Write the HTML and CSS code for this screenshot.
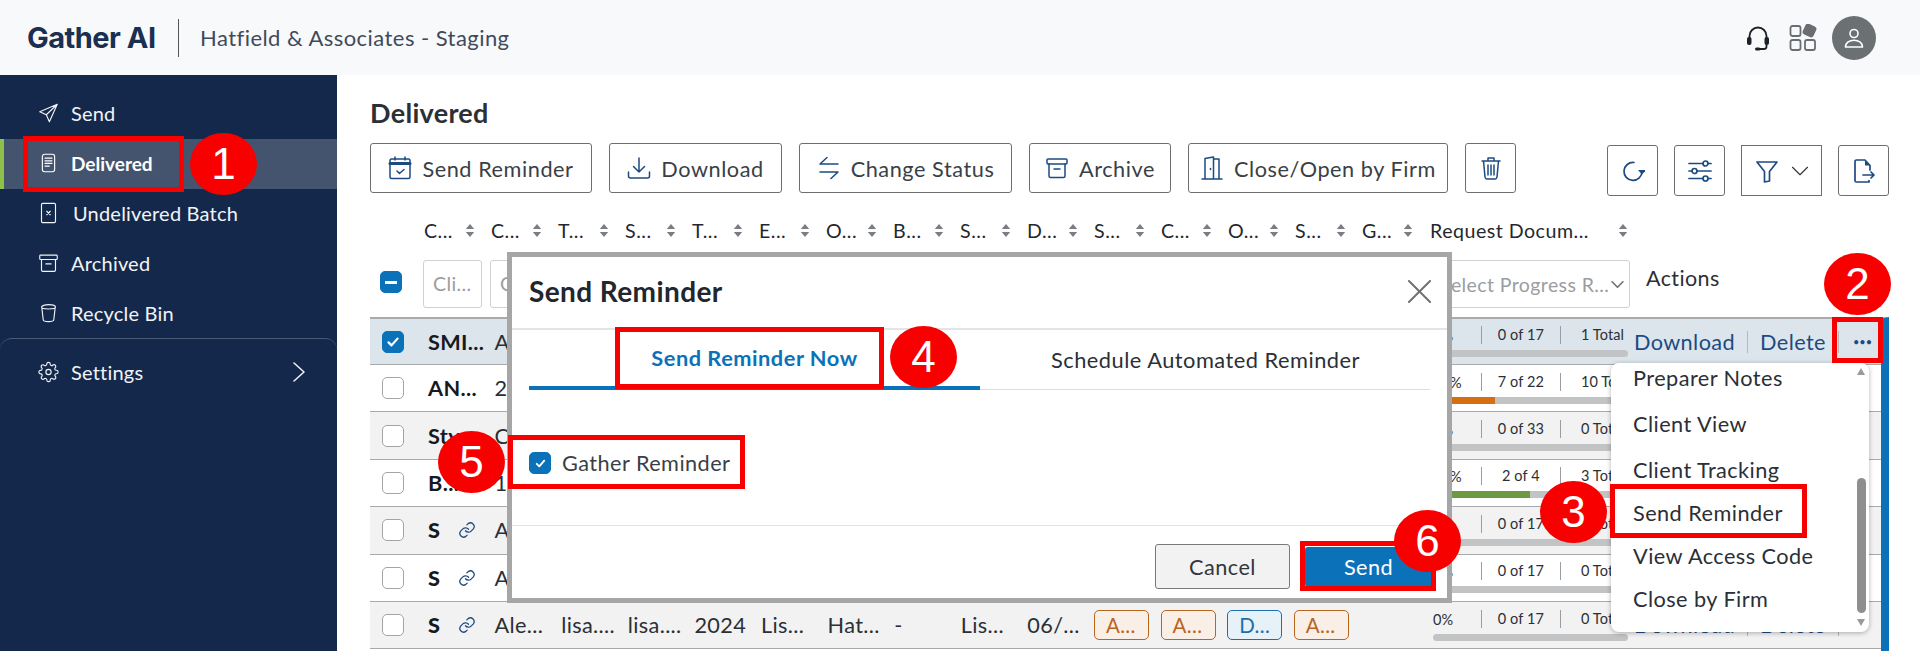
FILE: index.html
```
<!DOCTYPE html>
<html lang="en">
<head>
<meta charset="utf-8">
<title>Gather AI - Delivered</title>
<link rel="stylesheet" href="styles.css">
</head>
<body>
<svg class="sprite" width="0" height="0" aria-hidden="true">
  <symbol id="i-send" viewBox="0 0 24 24"><path d="M22 2 2 10.500l7.500 3.500L13 22zM22 2 9.500 14"/></symbol>
  <symbol id="i-doc" viewBox="0 0 24 24"><rect x="5" y="2" width="14" height="20" rx="2.500"/><path d="M8 6.500h8M8 9.500h8M8 12.500h8M8 15.500h5"/></symbol>
  <symbol id="i-undel" viewBox="0 0 24 24"><rect x="4" y="1" width="16" height="22" rx="1.500"/><path d="m10 10 4 4M14 10l-4 4"/></symbol>
  <symbol id="i-archive" viewBox="0 0 24 24"><rect x="2" y="3" width="20" height="5" rx="1"/><path d="M4 8v12a1.500 1.500 0 0 0 1.500 1.500h13A1.500 1.500 0 0 0 20 20V8M9 13h6"/></symbol>
  <symbol id="i-bin" viewBox="0 0 24 24"><path d="M4 5.500c0-4 16-4 16 0 0 2.500-16 2.500-16 0zM4.500 7l1.500 13c.3 2.500 11.700 2.500 12 0L19.500 7"/></symbol>
  <symbol id="i-gear" viewBox="0 0 24 24"><circle cx="12" cy="12" r="3"/><path d="M19.400 15a1.650 1.650 0 0 0 .33 1.820l.06.06a2 2 0 0 1 0 2.830 2 2 0 0 1-2.830 0l-.06-.06a1.650 1.650 0 0 0-1.820-.33 1.650 1.650 0 0 0-1 1.510V21a2 2 0 0 1-2 2 2 2 0 0 1-2-2v-.09A1.650 1.650 0 0 0 9 19.400a1.650 1.650 0 0 0-1.820.33l-.06.06a2 2 0 0 1-2.830 0 2 2 0 0 1 0-2.830l.06-.06a1.650 1.650 0 0 0 .33-1.820 1.650 1.650 0 0 0-1.510-1H3a2 2 0 0 1-2-2 2 2 0 0 1 2-2h.09A1.650 1.650 0 0 0 4.600 9a1.650 1.650 0 0 0-.33-1.820l-.06-.06a2 2 0 0 1 0-2.830 2 2 0 0 1 2.830 0l.06.06a1.650 1.650 0 0 0 1.820.33H9a1.650 1.650 0 0 0 1-1.510V3a2 2 0 0 1 2-2 2 2 0 0 1 2 2v.09a1.650 1.650 0 0 0 1 1.510 1.650 1.650 0 0 0 1.820-.33l.06-.06a2 2 0 0 1 2.830 0 2 2 0 0 1 0 2.830l-.06.06a1.650 1.650 0 0 0-.33 1.820V9a1.650 1.650 0 0 0 1.510 1H21a2 2 0 0 1 2 2 2 2 0 0 1-2 2h-.09a1.650 1.650 0 0 0-1.510 1z"/></symbol>
  <symbol id="i-cal" viewBox="0 0 24 24"><rect x="2" y="3" width="20" height="19.500" rx="1.500"/><path d="M7 1v3M17 1v3M9 15l2.500 2.500L16 13.500"/><path class="thick" d="M2 7.500h20"/></symbol>
  <symbol id="i-down" viewBox="0 0 24 24"><path d="M12 2v14M6.500 10.500 12 16l5.500-5.500M1.500 16v4A2 2 0 0 0 3.500 22h17a2 2 0 0 0 2-2v-4"/></symbol>
  <symbol id="i-swap" viewBox="0 0 24 24"><path d="M10 1.500 3 8h18M3 16h18l-7 6.500"/></symbol>
  <symbol id="i-door" viewBox="0 0 24 24"><path d="M2 23h20M5 23V2.500L13.500 1v22M13.500 3H19v20M10.500 12.500v1"/></symbol>
  <symbol id="i-trash" viewBox="0 0 24 24"><path d="M3 5h18M9 5V2h6v3M4.500 5l1.500 16c.2 1.500 1 2 2 2h8c1 0 1.800-.5 2-2l1.500-16M9 9v10M12 9v10M15 9v10"/></symbol>
  <symbol id="i-refresh" viewBox="0 0 24 24"><path d="M13 3.500A9 9 0 1 0 21 12.500"/><path class="solid" d="m17 11 8 0-4 4.500z"/></symbol>
  <symbol id="i-sliders" viewBox="0 0 24 24"><path d="M1 4.500h14M20 4.500h3M1 12h3M9 12h14M1 19.500h14M20 19.500h3"/><circle cx="17.500" cy="4.500" r="2.500"/><circle cx="6.500" cy="12" r="2.500"/><circle cx="17.500" cy="19.500" r="2.500"/></symbol>
  <symbol id="i-filter" viewBox="0 0 24 24"><path d="M2 3h20l-7.500 9.500V22L9.500 23V12.500z"/></symbol>
  <symbol id="i-chev" viewBox="0 0 24 24"><path d="m2 7 10 10L22 7"/></symbol>
  <symbol id="i-chev-r" viewBox="0 0 12 20"><path d="m1 1 10 9-10 9"/></symbol>
  <symbol id="i-export" viewBox="0 0 24 24"><path d="M17 21.500V23H4.500A1.500 1.500 0 0 1 3 21.500v-19A1.500 1.500 0 0 1 4.500 1H13l5 5.500V11M11 16h11M19 13l3 3-3 3"/><path class="solid" d="M13 1l5 5.500h-5z"/></symbol>
  <symbol id="i-link" viewBox="0 0 24 24"><path d="M10 13a5 5 0 0 0 7.500.5l3-3a5 5 0 0 0-7-7l-1.700 1.700"/><path d="M14 11a5 5 0 0 0-7.500-.5l-3 3a5 5 0 0 0 7 7l1.700-1.700"/></symbol>
  <symbol id="i-sort" viewBox="0 0 10 14"><path class="solid" d="M5 0 9.500 5.500H.5zM5 14 .5 8.500h9z"/></symbol>
  <symbol id="i-check" viewBox="0 0 24 24"><path d="m6 12.500 4 4 8-9"/></symbol>
  <symbol id="i-x" viewBox="0 0 24 24"><path d="m1 1 22 22M23 1 1 23"/></symbol>
</svg>

<div class="app">
  <header class="topbar">
    <span class="logo">Gather AI</span>
    <span class="firm">Hatfield &amp; Associates - Staging</span>
    <div class="top-icons">
      <svg class="top-headset" viewBox="0 0 24 26"><path class="hs-line" d="M3.500 14V11a8.500 8.500 0 0 1 17 0v3M20.500 20v1.500a2.500 2.500 0 0 1-2.500 2.500h-4"/><rect class="hs-fill" x="1" y="12" width="4.500" height="8" rx="2"/><rect class="hs-fill" x="18.500" y="12" width="4.500" height="8" rx="2"/><rect class="hs-fill" x="9" y="22.500" width="5.500" height="3" rx="1.500"/></svg>
      <svg class="top-grid" viewBox="0 0 28 28"><rect x="1.500" y="2" width="10" height="10" rx="2"/><rect x="1.500" y="16" width="10" height="10" rx="2"/><rect x="16" y="16" width="10" height="10" rx="2"/><rect class="grid-solid" x="15.500" y="1.500" width="10" height="10" rx="2" transform="rotate(25 20.500 6.500)"/></svg>
      <span class="avatar"><svg viewBox="0 0 24 24"><circle cx="12" cy="7.500" r="4"/><path d="M3.500 21c0-9 17-9 17 0z"/></svg></span>
    </div>
  </header>

  <div class="layout">
    <aside class="sidebar">
      <nav class="nav">
        <a class="nav-item"><svg class="nav-icon"><use href="#i-send"/></svg>Send</a>
        <a class="nav-item is-active"><svg class="nav-icon"><use href="#i-doc"/></svg>Delivered</a>
        <a class="nav-item nav-item-wide"><svg class="nav-icon"><use href="#i-undel"/></svg>Undelivered Batch</a>
        <a class="nav-item"><svg class="nav-icon"><use href="#i-archive"/></svg>Archived</a>
        <a class="nav-item"><svg class="nav-icon"><use href="#i-bin"/></svg>Recycle Bin</a>
      </nav>
      <a class="nav-settings"><svg class="nav-icon"><use href="#i-gear"/></svg>Settings<svg class="nav-chev"><use href="#i-chev-r"/></svg></a>
    </aside>

    <main class="main">
      <h1 class="page-title">Delivered</h1>
      <div class="toolbar">
        <button class="btn w-remind"><svg class="btn-icon"><use href="#i-cal"/></svg>Send Reminder</button>
        <button class="btn w-down"><svg class="btn-icon"><use href="#i-down"/></svg>Download</button>
        <button class="btn w-status"><svg class="btn-icon"><use href="#i-swap"/></svg>Change Status</button>
        <button class="btn w-arch"><svg class="btn-icon"><use href="#i-archive"/></svg>Archive</button>
        <button class="btn w-close"><svg class="btn-icon"><use href="#i-door"/></svg>Close/Open by Firm</button>
        <button class="btn w-trash"><svg class="btn-icon"><use href="#i-trash"/></svg></button>
        <div class="tools">
          <button class="tool"><svg class="tool-icon"><use href="#i-refresh"/></svg></button>
          <button class="tool"><svg class="tool-icon"><use href="#i-sliders"/></svg></button>
          <button class="tool tool-wide"><svg class="tool-icon"><use href="#i-filter"/></svg><svg class="tool-chev"><use href="#i-chev"/></svg></button>
          <button class="tool"><svg class="tool-icon"><use href="#i-export"/></svg></button>
        </div>
      </div>

      <div class="grid-row head">
        <span></span>
        <span class="th">C...<svg class="sort"><use href="#i-sort"/></svg></span>
        <span class="th">C...<svg class="sort"><use href="#i-sort"/></svg></span>
        <span class="th">T...<svg class="sort"><use href="#i-sort"/></svg></span>
        <span class="th">S...<svg class="sort"><use href="#i-sort"/></svg></span>
        <span class="th">T...<svg class="sort"><use href="#i-sort"/></svg></span>
        <span class="th">E...<svg class="sort"><use href="#i-sort"/></svg></span>
        <span class="th">O...<svg class="sort"><use href="#i-sort"/></svg></span>
        <span class="th">B...<svg class="sort"><use href="#i-sort"/></svg></span>
        <span class="th">S...<svg class="sort"><use href="#i-sort"/></svg></span>
        <span class="th">D...<svg class="sort"><use href="#i-sort"/></svg></span>
        <span class="th">S...<svg class="sort"><use href="#i-sort"/></svg></span>
        <span class="th">C...<svg class="sort"><use href="#i-sort"/></svg></span>
        <span class="th">O...<svg class="sort"><use href="#i-sort"/></svg></span>
        <span class="th">S...<svg class="sort"><use href="#i-sort"/></svg></span>
        <span class="th">G...<svg class="sort"><use href="#i-sort"/></svg></span>
        <span class="th th-wide">Request Docum...<svg class="sort"><use href="#i-sort"/></svg></span>
      </div>

      <div class="grid-row filters">
        <span class="cb cb-mixed"></span>
        <span class="input">Cli...</span>
        <span class="input">C...</span>
        <span class="select">Select Progress R...<svg class="select-chev"><use href="#i-chev"/></svg></span>
        <span class="actions-head">Actions</span>
      </div>

      <div class="rows">
        <div class="row is-selected">
          <span class="cb cb-on"><svg><use href="#i-check"/></svg></span>
          <span class="td td-name">SMI...</span><span class="td">A...</span>
          <div class="prog"><div class="prog-text"><span>0%</span><span class="prog-mid">0 of 17</span><span class="prog-end">1 Total</span></div><div class="bar"></div></div>
          <div class="acts"><a class="act">Download</a><a class="act act-sep">Delete</a><span class="act-more">•••</span></div>
        </div>
        <div class="row">
          <span class="cb"></span>
          <span class="td td-name">AN...</span><span class="td">2...</span>
          <div class="prog"><div class="prog-text"><span>32%</span><span class="prog-mid">7 of 22</span><span class="prog-end">10 Total</span></div><div class="bar"><i class="fill fill-orange"></i></div></div>
        </div>
        <div class="row is-alt">
          <span class="cb"></span>
          <span class="td td-name">Sty...</span><span class="td">C...</span>
          <div class="prog"><div class="prog-text"><span>0%</span><span class="prog-mid">0 of 33</span><span class="prog-end">0 Total</span></div><div class="bar"></div></div>
        </div>
        <div class="row">
          <span class="cb"></span>
          <span class="td td-name">B...</span><span class="td">1...</span>
          <div class="prog"><div class="prog-text"><span>50%</span><span class="prog-mid">2 of 4</span><span class="prog-end">3 Total</span></div><div class="bar"><i class="fill fill-green"></i></div></div>
        </div>
        <div class="row is-alt">
          <span class="cb"></span>
          <span class="td td-name td-linked"><b>S</b><svg class="link"><use href="#i-link"/></svg></span><span class="td">A...</span>
          <div class="prog"><div class="prog-text"><span>0%</span><span class="prog-mid">0 of 17</span><span class="prog-end">0 Total</span></div><div class="bar"></div></div>
        </div>
        <div class="row">
          <span class="cb"></span>
          <span class="td td-name td-linked"><b>S</b><svg class="link"><use href="#i-link"/></svg></span><span class="td">A...</span>
          <div class="prog"><div class="prog-text"><span>0%</span><span class="prog-mid">0 of 17</span><span class="prog-end">0 Total</span></div><div class="bar"></div></div>
        </div>
        <div class="row is-alt">
          <span class="cb"></span>
          <span class="td td-name td-linked"><b>S</b><svg class="link"><use href="#i-link"/></svg></span>
          <span class="td">Ale...</span><span class="td">lisa....</span><span class="td">lisa....</span><span class="td">2024</span><span class="td">Lis...</span><span class="td">Hat...</span><span class="td">-</span><span class="td">Lis...</span><span class="td">06/...</span>
          <span class="td"><span class="tag">A...</span></span><span class="td"><span class="tag">A...</span></span><span class="td"><span class="tag tag-blue">D...</span></span><span class="td"><span class="tag">A...</span></span>
          <div class="prog"><div class="prog-text"><span>0%</span><span class="prog-mid">0 of 17</span><span class="prog-end">0 Total</span></div><div class="bar"></div></div>
          <div class="acts"><a class="act">Download</a><a class="act act-sep">Delete</a></div>
        </div>
      </div>
    </main>
  </div>

  <div class="menu">
    <a class="menu-item menu-first">Preparer Notes</a>
    <a class="menu-item menu-gap">Client View</a>
    <a class="menu-item">Client Tracking</a>
    <a class="menu-item">Send Reminder</a>
    <a class="menu-item">View Access Code</a>
    <a class="menu-item">Close by Firm</a>
    <span class="scroll-up"></span>
    <span class="scroll-thumb"></span>
    <span class="scroll-down"></span>
  </div>

  <section class="modal">
    <div class="modal-head">
      <h2 class="modal-title">Send Reminder</h2>
      <svg class="modal-x"><use href="#i-x"/></svg>
    </div>
    <div class="tabs">
      <span class="tab is-on">Send Reminder Now</span>
      <span class="tab">Schedule Automated Reminder</span>
    </div>
    <div class="modal-body">
      <label class="check-line"><span class="cb cb-small"><svg><use href="#i-check"/></svg></span>Gather Reminder</label>
    </div>
    <div class="modal-foot">
      <button class="m-btn m-cancel">Cancel</button>
      <button class="m-btn m-send">Send</button>
    </div>
  </section>

  <span class="mark mark-1"></span>
  <span class="mark mark-2"></span>
  <span class="mark mark-3"></span>
  <span class="mark mark-4"></span>
  <span class="mark mark-5"></span>
  <span class="mark mark-6"></span>
  <span class="badge badge-1">1</span>
  <span class="badge badge-2">2</span>
  <span class="badge badge-3">3</span>
  <span class="badge badge-4">4</span>
  <span class="badge badge-5">5</span>
  <span class="badge badge-6">6</span>
</div>
</body>
</html>
```
FILE: styles.css
```
* { box-sizing: border-box; }
html, body { margin: 0; height: 100%; overflow: hidden; background: #fff; }
body { font-family: "Lato", "Open Sans", sans-serif; color: #2b2f36; }
.sprite { position: absolute; }
svg { fill: none; stroke: currentColor; stroke-width: 1.5; stroke-linecap: round; stroke-linejoin: round; flex: none; }
.solid { fill: currentColor; stroke: none; }
.thick { stroke-width: 3; }
a { color: inherit; text-decoration: none; }
button { font: inherit; color: inherit; background: #fff; cursor: pointer; }

.app { position: relative; width: 1920px; height: 651px; overflow: hidden; display: flex; flex-direction: column; }

/* top bar */
.topbar { height: 75px; flex: none; background: #f8f9fb; display: flex; align-items: center; padding: 0 44px 0 27px; }
.logo { font-family: "Inter", sans-serif; font-weight: 700; font-size: 29px; color: #1b2f50; letter-spacing: -0.5px; width: 152px; height: 38px; line-height: 38px; border-right: 1px solid #555; flex: none; white-space: nowrap; }
.firm { margin-left: 21px; font-size: 22px; letter-spacing: .45px; color: #3f4a5c; }
.top-icons { margin-left: auto; display: flex; align-items: center; }
.top-headset { width: 24px; height: 26px; color: #1c2129; stroke-width: 1.800; margin-right: 19px; }
.hs-fill { fill: #1c2129; stroke: none; }
.top-grid { width: 28px; height: 28px; color: #6a6e73; stroke-width: 1.800; margin-right: 15px; }
.grid-solid { fill: #6a6e73; }
.avatar { width: 44px; height: 44px; border-radius: 50%; background: #6b7073; display: flex; align-items: center; justify-content: center; color: #fff; }
.avatar svg { width: 24px; height: 24px; stroke-width: 1.600; }

/* layout */
.layout { flex: 1; display: flex; min-height: 0; }
.sidebar { width: 337px; flex: none; background: #14284b; color: #f1f3f6; padding-top: 14px; font-size: 20px; letter-spacing: .2px; }
.nav { display: flex; flex-direction: column; }
.nav-item { height: 50px; display: flex; align-items: center; padding: 0 0 2px 38px; gap: 12px; }
.nav-item-wide { gap: 14px; }
.nav-item.is-active { background: #44546f; box-shadow: inset 4px 0 0 #8cc24a; font-weight: 700; font-size: 19px; letter-spacing: 0; color: #fff; }
.nav-icon { width: 21px; height: 24px; stroke-width: 1.300; }
.nav-settings { height: 70px; border-top: 1px solid #4a5a75; border-radius: 12px 12px 0 0; display: flex; align-items: center; padding: 0 32px 4px 38px; gap: 12px; margin-top: -1px; }
.nav-chev { width: 12px; height: 20px; margin-left: auto; }

/* main */
.main { flex: 1; min-width: 0; padding: 22px 31px 0 33px; display: flex; flex-direction: column; }
.page-title { margin: 0 0 14px; font-size: 27px; line-height: 32px; font-weight: 700; color: #2b2f36; letter-spacing: .3px; }
.toolbar { display: flex; gap: 17px; align-items: flex-start; height: 53px; flex: none; }
.btn { height: 50px; border: 1px solid #6c6f72; border-radius: 3px; display: flex; align-items: center; justify-content: center; gap: 10px; padding: 2px 0 0; font-size: 21.700px; letter-spacing: .55px; color: #3a3f46; white-space: nowrap; }
.btn-icon { width: 24px; height: 24px; color: #1c4b82; margin-top: -2px; }
.w-remind { width: 222px; }
.w-down { width: 173px; }
.w-status { width: 213px; }
.w-arch { width: 142px; }
.w-close { width: 260px; }
.w-trash { width: 51px; }
.tools { margin-left: auto; display: flex; gap: 16px; margin-top: 2px; }
.tool { width: 51px; height: 51px; border: 1px solid #6c6f72; border-radius: 3px; display: flex; align-items: center; justify-content: center; color: #1c4b82; padding: 0; }
.tool-wide { width: 81px; gap: 12px; border-radius: 0; }
.tool-icon { width: 24px; height: 24px; stroke-width: 1.700; }
.tool-chev { width: 18px; height: 18px; color: #333; }

/* table */
.grid-row { display: grid; grid-template-columns: 54px repeat(15, 67px) 203px 1fr; }
.head { height: 33px; margin-top: 18px; align-items: center; flex: none; }
.th { display: flex; align-items: center; font-size: 19.600px; letter-spacing: .5px; color: #24282e; white-space: nowrap; }
.sort { width: 10px; height: 13px; color: #7a7d81; margin-left: auto; margin-right: 16px; }
.th-wide .sort { margin-right: 4px; }
.th-wide { grid-column: 17; padding-left: 1px; }
.filters { height: 70px; flex: none; padding-top: 13px; }
.cb { display: flex; align-items: center; justify-content: center; width: 22px; height: 22px; border: 1px solid #a2a5a8; border-radius: 5px; background: #fff; color: #fff; }
.cb svg { width: 18px; height: 18px; stroke-width: 3; }
.cb-on { background: #0b72b9; border-color: #0b72b9; }
.cb-mixed { background: #0b72b9; border-color: #0b72b9; margin: 11px 0 0 10px; }
.cb-mixed::after { content: ""; width: 12px; height: 3px; background: #fff; }
.input { width: 59px; height: 48px; border: 1px solid #cfd1d3; border-radius: 3px; margin-left: -1px; padding-left: 9px; line-height: 46px; color: #9a9da1; font-size: 19.500px; letter-spacing: .4px; background: #fff; white-space: nowrap; overflow: hidden; }
.select { grid-column: 17; width: 201px; height: 48px; border: 1px solid #cfd1d3; border-radius: 3px; display: flex; align-items: center; padding-left: 10px; color: #9a9da1; font-size: 19.500px; letter-spacing: .4px; white-space: nowrap; }
.select-chev { width: 13px; height: 13px; color: #6d7074; margin-left: auto; margin-right: 5px; stroke-width: 3; }
.actions-head { grid-column: 18; padding-left: 14px; height: 36px; line-height: 36px; font-size: 21.500px; letter-spacing: .4px; color: #2b2f36; }

.rows { flex: 1; min-height: 0; display: flex; flex-direction: column; border-right: 8px solid #0b72b9; border-top: 2px solid #a8aaac; }
.row { display: grid; grid-template-columns: 58px repeat(15, 66.600px) 205px 1fr; height: 47.400px; flex: none; border-bottom: 1px solid #a8aaac; align-items: center; background: #fff; font-size: 21.700px; letter-spacing: .35px; }
.row .cb { margin-left: 12px; }
.is-selected { background: #dce5eb; height: 46px; }
.is-alt { background: #f2f2f2; }
.td { white-space: nowrap; color: #2b2f36; }
.td-name { font-weight: 700; color: #16191e; }
.td-linked { display: flex; align-items: center; }
.link { width: 18px; height: 20px; color: #1c4b82; margin-left: 18px; stroke-width: 1.700; }
.tag { display: inline-flex; width: 55px; height: 30px; align-items: center; padding-left: 11px; border: 1px solid #b8651f; border-radius: 5px; background: #f9efe6; color: #b8651f; font-size: 20.500px; vertical-align: middle; }
.tag-blue { border-color: #1c6fae; background: #e6f1f8; color: #1c6fae; }
.prog { grid-column: 17; padding: 0 4px 0 6px; font-size: 14.500px; letter-spacing: .1px; }
.prog-text { display: grid; grid-template-columns: 48px 79px 1fr; height: 20px; line-height: 20px; color: #2b2f36; white-space: nowrap; }
.prog-mid, .prog-end { text-align: center; border-left: 1px solid #9a9da1; height: 18px; line-height: 18px; }
.prog-end { text-align: left; padding-left: 20px; }
.bar { height: 7px; border-radius: 4px; background: #c2c3c4; margin-top: 4px; overflow: hidden; }
.fill { display: block; height: 100%; }
.fill-orange { width: 32%; background: #d46f12; }
.fill-green { width: 50%; background: #6b9a42; }
.acts { grid-column: 18; display: flex; align-items: center; color: #1c4b82; letter-spacing: .4px; padding-left: 2px; white-space: nowrap; }
.act-sep { margin-left: 12px; padding: 0 12px; border-left: 1px solid #b5b7b9; border-right: 1px solid #b5b7b9; line-height: 22px; }
.act-more { margin-left: 14px; font-size: 11px; letter-spacing: 0; color: #1c4b82; }

/* row-actions dropdown */
.menu { position: absolute; left: 1611px; top: 363px; width: 258px; height: 269px; background: #fff; border-radius: 8px; box-shadow: 0 1px 5px rgba(0, 0, 0, .3); overflow: hidden; color: #2b2f36; font-size: 21.700px; letter-spacing: .45px; display: flex; flex-direction: column; }
.menu-item { height: 43px; flex: none; line-height: 43px; padding-left: 22px; white-space: nowrap; }
.menu-first { margin-top: -6.500px; }
.menu-first, .menu-gap { margin-bottom: 3px; }
.scroll-up, .scroll-down { position: absolute; left: 246px; width: 0; height: 0; border-left: 4.500px solid transparent; border-right: 4.500px solid transparent; }
.scroll-up { top: 5px; border-bottom: 7px solid #9a9a9a; }
.scroll-down { top: 256px; border-top: 7px solid #9a9a9a; }
.scroll-thumb { position: absolute; left: 246px; top: 115px; width: 9px; height: 135px; border-radius: 5px; background: #8f8f8f; }

/* modal */
.modal { position: absolute; left: 507px; top: 252px; width: 945px; height: 351px; border: 5px solid #a6a6a6; background: #fff; display: flex; flex-direction: column; }
.modal-head { height: 73px; flex: none; display: flex; align-items: center; justify-content: space-between; padding: 0 16px 3px 17px; border-bottom: 2px solid #e1e4e8; }
.modal-title { margin: 0; font-size: 28px; font-weight: 700; letter-spacing: .4px; color: #23262c; }
.modal-x { width: 23px; height: 23px; color: #6d6f72; stroke-width: 2; }
.tabs { display: grid; grid-template-columns: 451px 451px; margin: 0 17px; height: 60px; flex: none; border-bottom: 1px solid #dcdfe2; }
.tab { display: flex; align-items: center; justify-content: center; padding-bottom: 1px; font-size: 21.800px; letter-spacing: .5px; color: #2b2f36; white-space: nowrap; }
.tab.is-on { color: #0b72b9; font-weight: 700; border-bottom: 4px solid #0b72b9; height: 60px; }
.modal-body { flex: 1; padding: 60px 17px 0; border-bottom: 1px solid #e1e3e6; }
.check-line { display: flex; align-items: center; gap: 11px; font-size: 21.700px; letter-spacing: .45px; color: #3a3f46; }
.cb-small { background: #0b72b9; border-color: #0b72b9; }
.cb-small svg { width: 15px; height: 15px; }
.modal-foot { height: 72px; flex: none; display: flex; justify-content: flex-end; align-items: center; gap: 15px; padding: 9px 15px 0 0; }
.m-btn { border-radius: 3px; font-size: 21.700px; letter-spacing: .45px; padding: 0; }
.m-cancel { width: 135px; height: 45px; background: #f2f2f2; border: 1px solid #77797c; color: #33373c; }
.m-send { width: 127px; height: 40px; background: #0b72b9; color: #fff; border: 0; }

/* tutorial annotations */
.mark { position: absolute; border: 5px solid #f90000; }
.mark-1 { left: 23px; top: 136px; width: 161px; height: 56px; }
.mark-2 { left: 1832px; top: 317px; width: 51px; height: 46px; }
.mark-3 { left: 1610px; top: 484px; width: 197px; height: 54px; }
.mark-4 { left: 615px; top: 327px; width: 269px; height: 62px; }
.mark-5 { left: 508px; top: 435px; width: 237px; height: 54px; }
.mark-6 { left: 1300px; top: 541px; width: 136px; height: 50px; }
.badge { position: absolute; width: 67px; height: 62px; border-radius: 50%; background: #f90000; color: #fff; font-family: "Liberation Sans", Arial, sans-serif; font-size: 44px; line-height: 62px; text-align: center; }
.badge-1 { left: 190px; top: 133px; }
.badge-2 { left: 1824px; top: 253px; }
.badge-3 { left: 1540px; top: 481px; }
.badge-4 { left: 890px; top: 326px; }
.badge-5 { left: 438px; top: 431px; }
.badge-6 { left: 1394px; top: 510px; }
```
